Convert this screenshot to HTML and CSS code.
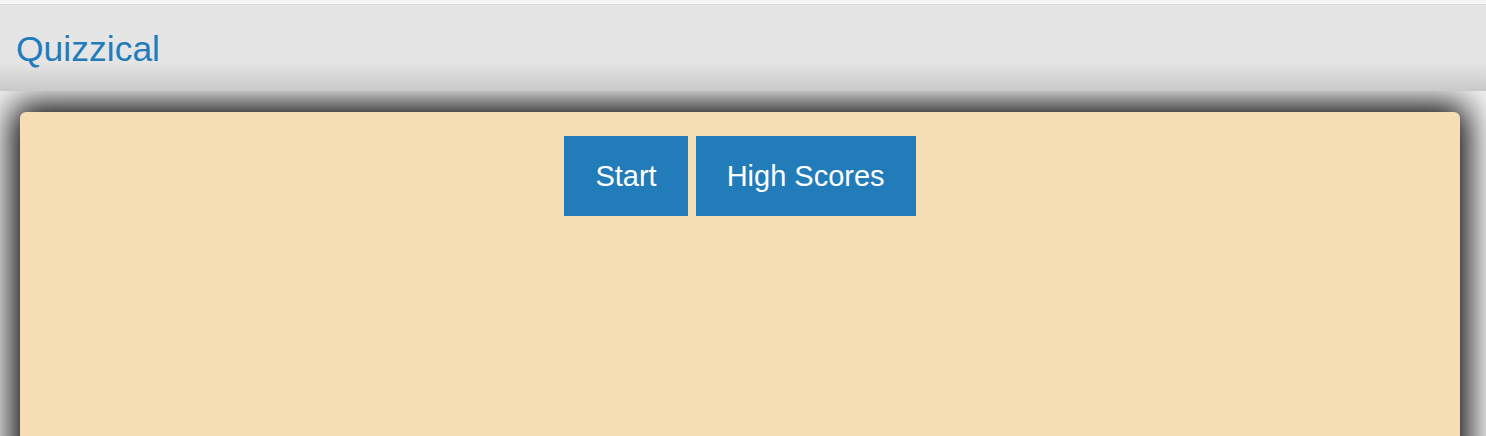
FILE: index.html
```html
<!DOCTYPE html>
<html>
<head>
<meta charset="utf-8">
<title>Quizzical</title>
<link rel="stylesheet" href="styles.css">
</head>
<body>
<header class="topbar">
  <h1 class="brand">Quizzical</h1>
</header>
<main class="card">
  <div class="actions">
    <button class="btn">Start</button>
    <button class="btn">High Scores</button>
  </div>
</main>
</body>
</html>
```
FILE: styles.css
```css
html, body {
  margin: 0;
  padding: 0;
  background: #ffffff;
  font-family: "Liberation Sans", Arial, sans-serif;
  overflow: hidden;
}
body {
  padding-top: 4px;
  background: #f4f4f4;
}
.topbar {
  position: relative;
  z-index: 1;
  height: 86px;
  border-top: 1px solid #dadada;
  background: linear-gradient(#e5e5e5 0%, #e5e5e5 66%, #c9c9c9 100%);
  display: flex;
  align-items: center;
  padding-left: 16px;
}
.brand {
  margin: 0;
  font-weight: normal;
  font-size: 35.5px;
  color: #227cbb;
  padding-top: 2px;
}
.card {
  margin: 21px 26px 0 20px;
  height: 420px;
  background: #f5deb3;
  border-radius: 6px;
  box-shadow: 0 0 35px 8px #000000;
  padding-top: 24px;
  box-sizing: border-box;
}
.actions {
  display: flex;
  justify-content: center;
  gap: 8px;
}
.btn {
  height: 80px;
  padding: 0 31px;
  border: none;
  border-radius: 0;
  background: #237cba;
  color: #ffffff;
  font-family: "Liberation Sans", Arial, sans-serif;
  font-size: 29px;
}
```
